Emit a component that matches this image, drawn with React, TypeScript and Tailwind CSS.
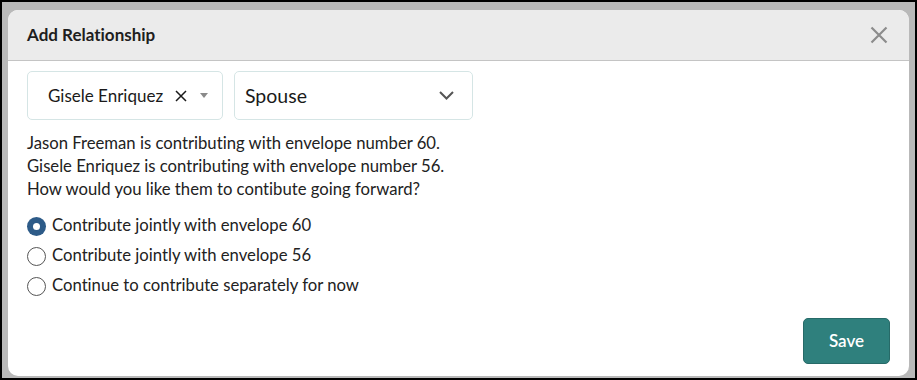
import { useState } from "react"

const options = [
  { id: "joint-60", label: "Contribute jointly with envelope 60" },
  { id: "joint-56", label: "Contribute jointly with envelope 56" },
  { id: "separate", label: "Continue to contribute separately for now" },
]

function Radio({ checked }: { checked: boolean }) {
  if (checked) {
    return (
      <span className="flex h-[19px] w-[19px] shrink-0 items-center justify-center rounded-full bg-[#2d5b88]">
        <span className="h-[7px] w-[7px] rounded-full bg-white" />
      </span>
    )
  }
  return <span className="h-[19px] w-[19px] shrink-0 rounded-full border border-[#555] bg-white" />
}

export default function App() {
  const [choice, setChoice] = useState("joint-60")

  return (
    <div className="h-[380px] w-[917px] overflow-hidden border-2 border-black bg-[#b9b9b9] pl-[6px] pt-[8px] font-['Lato',sans-serif] text-[#222] [font-variant-ligatures:none]">
      <div className="flex h-[366px] w-[901px] flex-col overflow-hidden rounded-[10px] bg-white">
        {/* Header */}
        <div className="flex h-[51px] shrink-0 items-center justify-between border-b border-[#c4c4c4] bg-[#ebebeb] pl-[19px] pr-[21px]">
          <h2 className="text-[17px] font-bold text-[#1e1e1e]">Add Relationship</h2>
          <button className="text-[#8c8c8c]">
            <svg width="18" height="18" viewBox="0 0 18 18" fill="none" stroke="currentColor" strokeWidth="2.2">
              <path d="M1.5 1.5L16.5 16.5M16.5 1.5L1.5 16.5" />
            </svg>
          </button>
        </div>

        {/* Body */}
        <div className="px-[19px] pt-[10px]">
          <div className="flex gap-[11px]">
            <div className="flex h-[49px] w-[196px] items-center rounded-[5px] border border-[#d5e5e5] pl-[20px] pr-[14px]">
              <span className="flex-1 text-[17px] text-[#1a1a1a]">Gisele Enriquez</span>
              <svg width="12" height="12" viewBox="0 0 12 12" fill="none" stroke="#1a1a1a" strokeWidth="1.5">
                <path d="M1 1L11 11M11 1L1 11" />
              </svg>
              <svg className="ml-[13px]" width="8" height="5" viewBox="0 0 8 5" fill="#8a8a8a">
                <path d="M0 0H8L4 5Z" />
              </svg>
            </div>
            <div className="flex h-[49px] w-[239px] items-center rounded-[5px] border border-[#d5e5e5] pl-[10px] pr-[18px]">
              <span className="flex-1 text-[19.5px] text-[#1a1a1a]">Spouse</span>
              <svg width="15" height="9" viewBox="0 0 15 9" fill="none" stroke="#555" strokeWidth="2">
                <path d="M1 1L7.5 7.5L14 1" />
              </svg>
            </div>
          </div>

          <div className="mt-[12px] text-[16.7px] leading-[23px]">
            <p>Jason Freeman is contributing with envelope number 60.</p>
            <p>Gisele Enriquez is contributing with envelope number 56.</p>
            <p>How would you like them to contibute going forward?</p>
          </div>

          <div className="mt-[10px] flex flex-col">
            {options.map((o) => (
              <label
                key={o.id}
                onClick={() => setChoice(o.id)}
                className="flex h-[30px] cursor-pointer items-center gap-[6px] text-[16.7px]"
              >
                <Radio checked={choice === o.id} />
                {o.label}
              </label>
            ))}
          </div>
        </div>

        {/* Footer */}
        <div className="mt-auto flex justify-end pb-[12px] pr-[19px]">
          <button className="h-[46px] w-[87px] rounded-[5px] border border-[#276a68] bg-[#2f807d] text-[17px] font-semibold text-white">
            Save
          </button>
        </div>
      </div>
    </div>
  )
}
